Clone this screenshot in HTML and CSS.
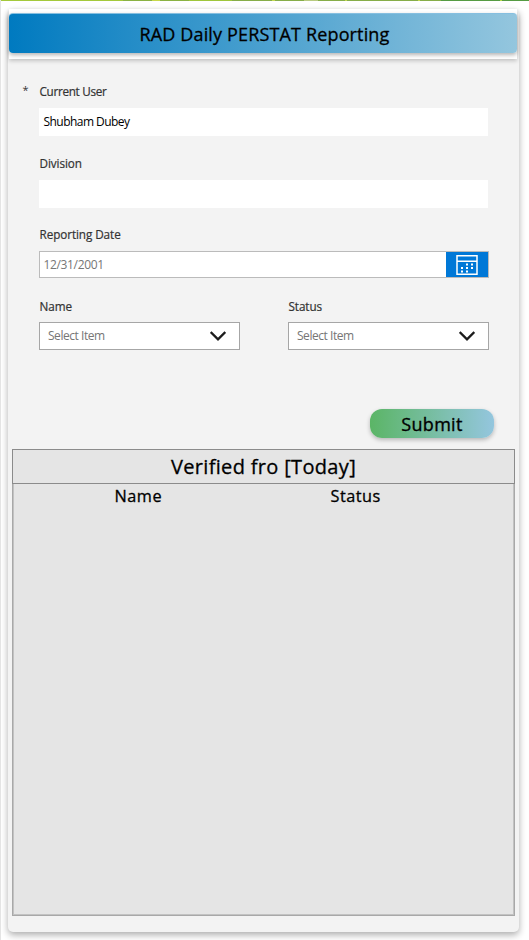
FILE: index.html
```html
<!DOCTYPE html>
<html lang="en">
<head>
<meta charset="utf-8">
<title>RAD Daily PERSTAT Reporting</title>
<link rel="stylesheet" href="styles.css">
</head>
<body>
<div class="strip"></div>
<main class="card">
  <div class="header"><h1 class="title"><span>RAD Daily PERSTAT Reporting</span></h1></div>
  <form class="form">
    <div class="field">
      <label class="label user-label"><span class="required">*</span><span class="t-user">Current User</span></label>
      <div class="input"><span>Shubham Dubey</span></div>
    </div>
    <div class="field">
      <label class="label"><span>Division</span></label>
      <div class="input"></div>
    </div>
    <div class="field">
      <label class="label"><span>Reporting Date</span></label>
      <div class="date">
        <span class="date-value">12/31/2001</span>
        <div class="date-button">
          <svg width="22" height="20" viewBox="0 0 22 20" fill="none" stroke="#fff">
            <path d="M1 .75H21V19.25H1ZM1 6.25H21" stroke-width="1.5"/>
            <path d="M10 9.5h2M15 9.5h2M5 13h2M10 13h2M15 13h2M5 16.5h2M10 16.5h2" stroke-width="1.8"/>
          </svg>
        </div>
      </div>
    </div>
    <div class="pair">
      <div class="field">
        <label class="label"><span>Name</span></label>
        <div class="select"><span>Select Item</span><svg width="16" height="10" viewBox="0 0 16 10" fill="none" stroke="#1c1c1c" stroke-width="2.3"><path d="M.7 1L8 8.3L15.3 1"/></svg></div>
      </div>
      <div class="field">
        <label class="label"><span>Status</span></label>
        <div class="select"><span>Select Item</span><svg width="16" height="10" viewBox="0 0 16 10" fill="none" stroke="#1c1c1c" stroke-width="2.3"><path d="M.7 1L8 8.3L15.3 1"/></svg></div>
      </div>
    </div>
    <button type="button" class="submit">Submit</button>
  </form>
  <section class="panel">
    <h2 class="panel-title"><span>Verified fro [Today]</span></h2>
    <div class="columns"><span class="col-name">Name</span><span class="col-status">Status</span></div>
  </section>
</main>
</body>
</html>
```
FILE: styles.css
```css
* { box-sizing: border-box; }
body {
  margin: 0;
  height: 940px;
  overflow: hidden;
  background: #fff;
  border-left: 1px solid #e4e4e4;
  font-family: "Open Sans", "Noto Sans", sans-serif;
  color: #000;
}
.strip {
  height: 1px;
  margin-left: -1px;
  background: linear-gradient(90deg, #a4c93b 0 123px, #8ab243 123px 152px, #c8d84a 152px 160px, #8ab243 160px 189px, #9fc63b 189px 232px, #86ad48 232px 272px, #c4d850 272px 275px, #86ad48 275px 304px, #b8ca80 304px 318px, #86ad48 318px 345px, #c4d850 345px 347px, #86ad48 347px 418px, #c4d850 418px 420px, #86ad48 420px 441px, #559b43 441px 500px, #b8d848 500px 502px, #559b43 502px);
}
.card {
  width: 511px;
  height: 923px;
  margin: 8px 0 0 7px;
  display: flex;
  flex-direction: column;
  background: #f3f3f3;
  border-radius: 5px;
  box-shadow: 0 3px 7px rgba(0, 0, 0, .32);
}
.header {
  width: 508px;
  height: 50px;
  margin-left: 1px;
  padding-top: 4px;
  background: #fff;
  box-shadow: 0 2px 4px rgba(0, 0, 0, .2);
}
.title {
  height: 40px;
  margin: 0;
  border-radius: 4px;
  border-top: 1px solid #86bfe0;
  background: linear-gradient(90deg, #007ac0, #94c6de);
  box-shadow: 0 2px 4px rgba(0, 0, 0, .3);
  font-size: 18px;
  font-weight: 500;
  letter-spacing: .15px;
  line-height: 41px;
  text-align: center;
  padding-left: 3px;
  -webkit-text-stroke: .3px #000;
}
.form {
  height: 390px;
  padding: 22px 31px 0;
  display: flex;
  flex-direction: column;
}
.field { height: 71.7px; }
.label {
  display: flex;
  height: 27px;
  padding-left: .5px;
  line-height: 21px;
  font-size: 11.7px;
  letter-spacing: -.07px;
  color: #333;
  -webkit-text-stroke: .22px #333;
}
.user-label { margin-left: -17px; }
.t-user { letter-spacing: -.29px; }
.required { width: 17px; font-size: 11px; line-height: 18px; -webkit-text-stroke: 0; }
.input {
  height: 28px;
  padding-left: 4.5px;
  background: #fff;
  font-size: 12px;
  letter-spacing: -.54px;
  line-height: 28px;
}
.date {
  display: flex;
  height: 27px;
  margin-right: -1px;
  border: 1px solid #bbb;
  background: #fff;
}
.date-value {
  flex: 1;
  padding-left: 3.5px;
  font-size: 12px;
  letter-spacing: -.35px;
  line-height: 26px;
  color: #767676;
}
.date-button {
  width: 42px;
  display: flex;
  align-items: center;
  justify-content: center;
  background: #0078d7;
}
.pair {
  display: grid;
  grid-template-columns: 201px 201px;
  justify-content: space-between;
  margin-right: -1px;
}
.select {
  display: flex;
  align-items: center;
  justify-content: space-between;
  height: 28px;
  margin-top: -1px;
  padding: 0 13px 0 8px;
  border: 1px solid #a6a6a6;
  background: #fff;
  font-size: 12px;
  letter-spacing: -.46px;
  line-height: 22px;
  color: #767676;
}
.select span { padding-bottom: 1px; }
.submit {
  align-self: flex-end;
  width: 124px;
  height: 29px;
  margin: 41px -6px 0 0;
  padding: 0;
  border: 0;
  border-radius: 12px;
  background: linear-gradient(90deg, #5bb566, #94c6de);
  box-shadow: 0 2px 4px rgba(0, 0, 0, .25);
  font: 500 18px/31px "Open Sans", sans-serif;
  letter-spacing: .3px;
  color: #000;
  -webkit-text-stroke: .35px #000;
}
.panel {
  width: 503px;
  height: 467px;
  margin: 0 0 0 4px;
  border: 1px solid #a8a8a8;
  background: #e5e5e5;
  box-shadow: inset 0 0 0 1px #c2c2c2;
}
.panel-title {
  height: 35px;
  margin: -1px -1px 0;
  border: 1px solid #8b8b8b;
  background: #e5e5e5;
  font-size: 20px;
  font-weight: 500;
  letter-spacing: .33px;
  line-height: 33px;
  text-align: center;
  -webkit-text-stroke: .3px #000;
}
.columns {
  display: flex;
  padding-left: 1.5px;
  font-size: 16.3px;
  letter-spacing: .5px;
  line-height: 24px;
  -webkit-text-stroke: .3px #000;
}
.col-name { width: 216px; padding-left: 100px; }
.col-status { padding-left: 100px; }
```
